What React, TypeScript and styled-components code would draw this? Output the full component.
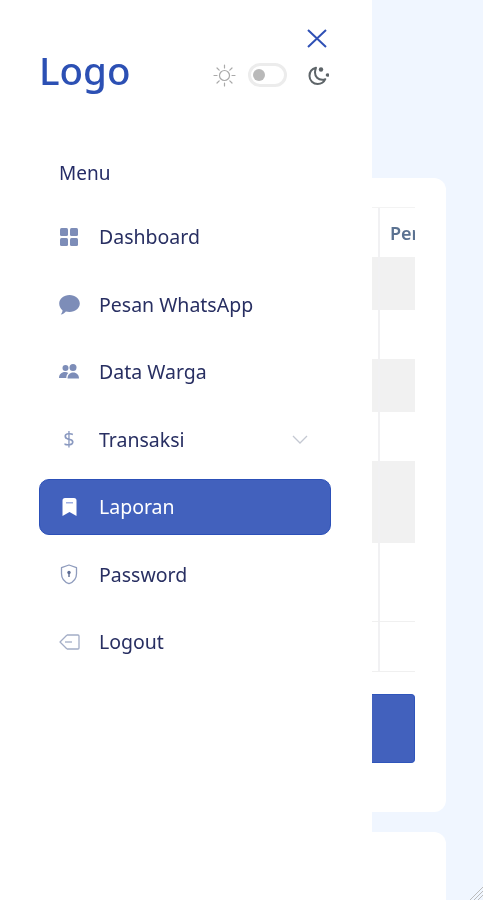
import React from "react";
import styled, { createGlobalStyle } from "styled-components";

const Global = createGlobalStyle`
  html, body { margin: 0; padding: 0; background: #f0f6ff; }
  * { box-sizing: border-box; }
  body { font-family: "Noto Sans", "Open Sans", sans-serif; overflow: hidden; }
`;

const Page = styled.div`
  display: flex;
  width: 483px;
  height: 900px;
  overflow: hidden;
  position: relative;
  background: #f0f6ff;
  filter: blur(0.4px);
`;

const Sidebar = styled.aside`
  flex: 0 0 372px;
  height: 900px;
  background: #fff;
  padding: 29px 41px 0 39px;
  display: flex;
  flex-direction: column;
`;

const CloseRow = styled.div`
  display: flex;
  justify-content: flex-end;
  height: 21px;
  padding-right: 4px;
`;

const Header = styled.div`
  display: flex;
  align-items: center;
  justify-content: space-between;
  height: 42px;
`;

const Logo = styled.div`
  font-size: 38.500px;
  line-height: 42px;
  font-weight: 500;
  color: #2c50b4;
  margin-top: -3px;
`;

const ThemeSwitch = styled.div`
  display: flex;
  align-items: center;
  margin-top: 8px;
  padding-right: 2px;
`;

const Toggle = styled.div`
  width: 39px;
  height: 24px;
  margin: 0 21px 0 12px;
  border: 3px solid #ececec;
  border-radius: 12px;
  background: #fff;
  display: flex;
  align-items: center;
  padding-left: 2px;
`;

const Knob = styled.span`
  width: 12px;
  height: 12px;
  border-radius: 50%;
  background: #b9b9b9;
`;

const MenuLabel = styled.div`
  margin: 69px 0 23.500px 20px;
  font-size: 19px;
  line-height: 24px;
  color: #252c66;
`;

const Nav = styled.nav`
  display: flex;
  flex-direction: column;
  gap: 11.500px;
`;

const Item = styled.div<{ $active?: boolean }>`
  display: flex;
  align-items: center;
  height: 56px;
  padding: 0 22px 0 19px;
  border-radius: 10px;
  font-size: 19.500px;
  color: ${(p) => (p.$active ? "#fff" : "#282f62")};
  background: ${(p) => (p.$active ? "#4261bd" : "transparent")};
  border: ${(p) => (p.$active ? "1px solid #2c50b8" : "1px solid transparent")};
`;

const IconBox = styled.span`
  flex: 0 0 20px;
  width: 20px;
  height: 20px;
  margin-right: 20px;
  display: flex;
  align-items: center;
  justify-content: center;
`;

const Dollar = styled.span`
  font-size: 20px;
  line-height: 20px;
  color: #8a99c0;
`;

const ItemLabel = styled.span`
  flex: 1;
`;

const Main = styled.main`
  flex: 1;
  min-width: 0;
  display: flex;
  flex-direction: column;
  gap: 20px;
  padding: 178px 37px 0 0;
`;

const Card = styled.section<{ $height: number }>`
  flex: 0 0 ${(p) => p.$height}px;
  background: #fff;
  border-radius: 0 12px 12px 0;
  padding: 29px 31px 0 0;
`;

const TableClip = styled.div`
  overflow: hidden;
  width: 43px;
  border-top: 1px solid #f3f3f3;
`;

const Row = styled.div<{ $height: number; $shaded?: boolean; $line?: boolean }>`
  height: ${(p) => p.$height}px;
  display: flex;
  background: ${(p) => (p.$shaded ? "#f1f1f1" : "transparent")};
  border-bottom: ${(p) => (p.$line ? "1px solid #f0f0f0" : "none")};
`;

const Stub = styled.div`
  flex: 0 0 6px;
`;

const Cell = styled.div`
  flex: 1;
  min-width: 0;
  border-left: 2px solid #f1f1f3;
  padding: 13px 0 0 10px;
  font-size: 18px;
  line-height: 24px;
  font-weight: 600;
  color: #5b7291;
  white-space: nowrap;
  overflow: hidden;
`;

const Submit = styled.div`
  width: 43px;
  height: 69px;
  margin-top: 22px;
  background: #4261bd;
  border: 1px solid #2f55bb;
  border-left: none;
  border-radius: 0 4px 4px 0;
`;

const Grip = styled.svg`
  position: absolute;
  right: 0;
  bottom: 0;
`;

const stroke = "#7d8db8";

const rows = [
  { h: 49, text: "Per" },
  { h: 53, shaded: true },
  { h: 49 },
  { h: 53, shaded: true },
  { h: 49 },
  { h: 82, shaded: true },
  { h: 79, line: true },
  { h: 50, line: true },
];

export default function App() {
  return (
    <Page>
      <Global />
      <Sidebar>
        <CloseRow>
          <svg width="20" height="19" viewBox="0 0 20 19" fill="none">
            <path d="M1 1l18 17M19 1L1 18" stroke="#2f50b5" strokeWidth="2" />
          </svg>
        </CloseRow>
        <Header>
          <Logo>Logo</Logo>
          <ThemeSwitch>
            <svg width="23" height="23" viewBox="0 0 23 23" fill="none" stroke="#a9a9a9" strokeWidth="1.200" strokeLinecap="round">
              <circle cx="11.500" cy="11.500" r="5" />
              <path d="M11.500 1v3M11.500 19v3M1 11.500h3M19 11.500h3M4 4l2.200 2.200M16.800 16.800L19 19M4 19l2.200-2.200M16.800 6.200L19 4" />
            </svg>
            <Toggle>
              <Knob />
            </Toggle>
            <svg width="21" height="21" viewBox="0 0 21 21" fill="none">
              <path d="M8 2.800C4 3.800 1.500 7 1.500 11c0 4.500 3.700 8 8.200 8 3.400 0 6.300-1.900 7.600-4.800-.9.400-1.900.6-3 .6-4.200 0-7.300-3.200-7.300-7.300 0-1.700.6-3.300 1-4.700z" stroke="#5d6468" strokeWidth="2" strokeLinejoin="round" />
              <circle cx="13" cy="4.500" r="2.200" fill="#5d6468" />
              <circle cx="19.500" cy="10" r="1.800" fill="#5d6468" />
            </svg>
          </ThemeSwitch>
        </Header>
        <MenuLabel>Menu</MenuLabel>
        <Nav>
          <Item>
            <IconBox>
              <svg width="18" height="18" viewBox="0 0 18 18" fill={stroke}>
                <rect x="0" y="0" width="8" height="8" rx="1.500" />
                <rect x="10" y="0" width="8" height="8" rx="1.500" />
                <rect x="0" y="10" width="8" height="8" rx="1.500" />
                <rect x="10" y="10" width="8" height="8" rx="1.500" />
              </svg>
            </IconBox>
            <ItemLabel>Dashboard</ItemLabel>
          </Item>
          <Item>
            <IconBox>
              <svg width="21" height="21" viewBox="0 0 21 21" fill={stroke} style={{ flex: "none" }}>
                <path d="M10.500 1C16.200 1 20.800 4.800 20.800 9.500s-4.600 8.500-10.300 8.500c-1.300 0-2.500-.2-3.600-.5C5.700 19 3.800 20.300 1.800 20.500c1-1.200 1.700-2.700 1.700-4.300C1.500 14.700.2 12.200.2 9.500.2 4.800 4.800 1 10.500 1z" />
              </svg>
            </IconBox>
            <ItemLabel>Pesan WhatsApp</ItemLabel>
          </Item>
          <Item>
            <IconBox>
              <svg width="20" height="16" viewBox="0 0 20 16" fill={stroke}>
                <circle cx="6.500" cy="4" r="3" />
                <circle cx="14" cy="3.500" r="3.500" />
                <path d="M0 14c0-3.500 2.500-6 6-6 1.300 0 2.400.3 3.300 1-1.300 1.200-2 3-2 5H0z" />
                <path d="M8.500 14.500c0-3.500 2.300-6 5.700-6s5.800 2.500 5.800 6h-11.500z" />
              </svg>
            </IconBox>
            <ItemLabel>Data Warga</ItemLabel>
          </Item>
          <Item>
            <IconBox>
              <Dollar>$</Dollar>
            </IconBox>
            <ItemLabel>Transaksi</ItemLabel>
            <svg width="16" height="9" viewBox="0 0 16 9" fill="none">
              <path d="M1 1l7 7 7-7" stroke="#c4c8d2" strokeWidth="1.300" />
            </svg>
          </Item>
          <Item $active>
            <IconBox>
              <svg width="15" height="18" viewBox="0 0 15 18" fill="#fff">
                <path d="M3 0h9a2.500 2.500 0 0 1 2.500 2.500V18l-7-4-7 4V2.500A2.500 2.500 0 0 1 3 0z" />
                <rect x="4" y="4" width="7" height="1.500" fill="#9fb0e2" />
              </svg>
            </IconBox>
            <ItemLabel>Laporan</ItemLabel>
          </Item>
          <Item>
            <IconBox>
              <svg width="18" height="21" viewBox="0 0 18 21" fill="none">
                <path d="M9 1l7.500 2.700v6c0 4.800-3.200 8.300-7.500 10-4.300-1.700-7.500-5.200-7.500-10v-6L9 1z" stroke="#8f9cbd" strokeWidth="1.300" strokeLinejoin="round" />
                <circle cx="9" cy="8.500" r="1.700" fill="#5d6c92" />
                <rect x="8.300" y="9" width="1.400" height="4" fill="#5d6c92" />
              </svg>
            </IconBox>
            <ItemLabel>Password</ItemLabel>
          </Item>
          <Item>
            <IconBox>
              <svg width="21" height="16" viewBox="0 0 21 16" fill="none" stroke="#a3adc6" strokeWidth="1.300" strokeLinejoin="round" style={{ flex: "none" }}>
                <path d="M8 1h11a1 1 0 0 1 1 1v12a1 1 0 0 1-1 1H8M8 1L1 8l7 7" />
                <path d="M6 8h7" />
              </svg>
            </IconBox>
            <ItemLabel>Logout</ItemLabel>
          </Item>
        </Nav>
      </Sidebar>
      <Main>
        <Card $height={634}>
          <TableClip>
            {rows.map((r, i) => (
              <Row key={i} $height={r.h} $shaded={r.shaded} $line={r.line}>
                <Stub />
                <Cell>{r.text}</Cell>
              </Row>
            ))}
          </TableClip>
          <Submit />
        </Card>
        <Card $height={100} />
      </Main>
      <Grip width="14" height="14" viewBox="0 0 14 14" fill="none" stroke="#bcbcbc" strokeWidth="1">
        <path d="M14 1L1 14M14 5L5 14M14 9l-5 5" />
      </Grip>
    </Page>
  );
}
